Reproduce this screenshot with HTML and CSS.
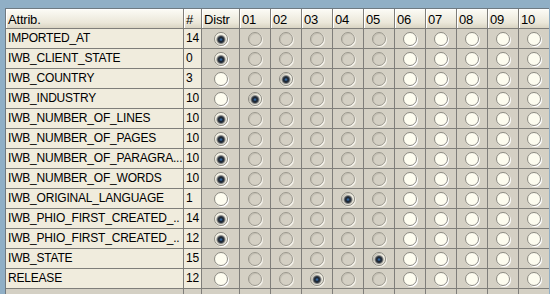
FILE: index.html
```html
<!DOCTYPE html>
<html lang="en">
<head>
    <meta charset="UTF-8">
    <title>Attributes</title>
    <link rel="stylesheet" href="styles.css">
</head>
<body>
    <div class="grid-frame">
        <div class="attr-grid" id="attrGrid">
            <div class="hd">Attrib.</div>
            <div class="hd">#</div>
            <div class="hd">Distr</div>
            <div class="hd">01</div>
            <div class="hd">02</div>
            <div class="hd">03</div>
            <div class="hd">04</div>
            <div class="hd">05</div>
            <div class="hd">06</div>
            <div class="hd">07</div>
            <div class="hd">08</div>
            <div class="hd">09</div>
            <div class="hd">10</div>
        </div>
    </div>

    <script>
        // name, count, checked column (0 = Distr, 1..10)
        const rows = [
            ['IMPORTED_AT', 14, 0],
            ['IWB_CLIENT_STATE', 0, 0],
            ['IWB_COUNTRY', 3, 2],
            ['IWB_INDUSTRY', 10, 1],
            ['IWB_NUMBER_OF_LINES', 10, 0],
            ['IWB_NUMBER_OF_PAGES', 10, 0],
            ['IWB_NUMBER_OF_PARAGRA...', 10, 0],
            ['IWB_NUMBER_OF_WORDS', 10, 0],
            ['IWB_ORIGINAL_LANGUAGE', 1, 4],
            ['IWB_PHIO_FIRST_CREATED_..', 14, 0],
            ['IWB_PHIO_FIRST_CREATED_..', 12, 0],
            ['IWB_STATE', 15, 5],
            ['RELEASE', 12, 3]
        ];

        const grid = document.getElementById('attrGrid');

        function cell(cls, text) {
            const div = document.createElement('div');
            div.className = cls;
            if (text !== undefined) div.textContent = text;
            grid.appendChild(div);
            return div;
        }

        rows.forEach(function(row) {
            cell('tx', row[0]);
            cell('tx', row[1]);
            for (let col = 0; col <= 10; col++) {
                const c = cell('rc');
                const radio = document.createElement('span');
                radio.className = 'radio';
                if (col >= 1 && col <= 5) radio.classList.add('off');
                if (col === row[2]) radio.classList.add('on');
                c.appendChild(radio);
            }
        });

        // empty row at the bottom
        for (let i = 0; i < 13; i++) cell('rc empty');
    </script>
</body>
</html>
```

FILE: styles.css
```css
body {
    margin: 0;
    background-color: #90afc6;
    font-family: 'Liberation Sans', Arial, sans-serif;
    font-size: 12px;
    letter-spacing: -0.2px;
    height: 294px;
    overflow: hidden;
}
.grid-frame {
    padding: 8px 0 0 5px;
}
.attr-grid {
    display: grid;
    grid-template-columns: 177px 17px 37px repeat(10, 30px);
    grid-auto-rows: 19px;
    gap: 1px;
    background-color: #7f7e7a;
    border-top: 1px solid #6f7a82;
    border-left: 1px solid #6f7a82;
    width: max-content;
}
.hd {
    background: linear-gradient(#fbfaf4, #ebe7d9 70%, #d9d4c3);
    border-top: 1px solid #ffffff;
    border-left: 1px solid #ffffff;
    padding: 2px 0 0 1px;
    font-size: 13px;
    color: #000;
    white-space: nowrap;
    overflow: hidden;
}
.tx {
    background-color: #f0ecdd;
    padding: 2px 0 0 2px;
    white-space: nowrap;
    overflow: hidden;
}
.rc {
    background-color: #d4d0c4;
    display: flex;
    align-items: center;
    justify-content: center;
}
.radio {
    width: 12px;
    height: 12px;
    border-radius: 50%;
    border: 1px solid #8c8a82;
    background-color: #fefdf0;
    box-shadow: 1px 1px 0 #ffffff;
}
.radio.off {
    background-color: #d4d0c4;
    border-color: #9a978d;
    box-shadow: inset 1px 1px 0 #c4c0b4, 1px 1px 0 #f4f2ea;
}
.radio.on {
    background: radial-gradient(circle at 50% 55%, #3d7ac0 0, #1b2531 2px, #2c3540 3px, #8d8c88 4px, #e8e6dc 5px, #fefdf0 6px);
    border-color: #8c8a82;
}
```
